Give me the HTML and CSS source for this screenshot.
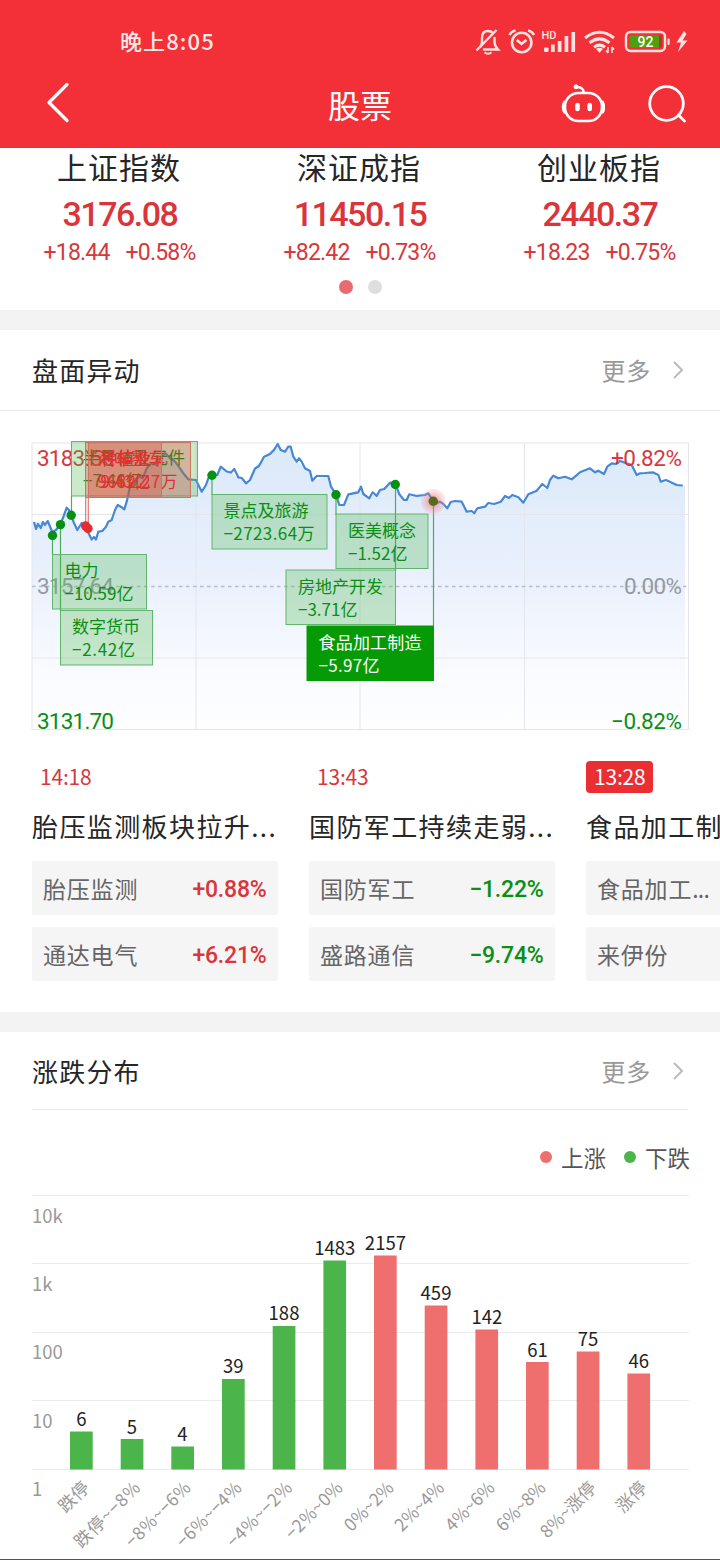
FILE: index.html
```
<!DOCTYPE html>
<html lang="zh-CN">
<head>
  <meta charset="UTF-8">
  <meta name="viewport" content="width=device-width, initial-scale=1.0">
  <title>股票</title>
  <link rel="stylesheet" href="styles.css">
</head>
<body>
  <header class="header">
    <div class="status-bar">
      <span class="status-time">晚上8:05</span>
      <svg class="status-icons" width="216" height="30" viewBox="474 27 216 30">
        <!-- Muted bell -->
        <g fill="none" stroke="#fde3e0" stroke-width="2.4">
          <path d="M480 47.500 Q482 45 482 41 V38 Q482 31 488 31 Q491 31 493 33"/>
          <path d="M494.500 37 V42 Q494.500 46 498 49.500 H483"/>
          <path d="M476.500 50.500 L496.500 30"/>
          <path d="M484.500 52.500 Q488 55 491.500 52.500" stroke-width="2"/>
        </g>
        <!-- Alarm clock -->
        <g fill="none" stroke="#fde3e0" stroke-width="2.6">
          <circle cx="521.700" cy="42.500" r="9.700"/>
          <path d="M516.800 40 L521.500 43.800 L526.500 40"/>
          <path d="M509.500 35 Q511 31.500 515.500 30.500 M528 30.500 Q532.500 31.500 534 35"/>
        </g>
        <!-- Signal -->
        <text class="hd-text" x="541.500" y="38.500">HD</text>
        <g fill="#fde3e0">
          <rect x="544" y="47.500" width="4.500" height="4.500" rx="1"/>
          <rect x="551" y="44.500" width="3.700" height="7.500"/>
          <rect x="557.800" y="41" width="3.700" height="11"/>
          <rect x="564.600" y="36" width="3.700" height="16"/>
          <rect x="571.400" y="32" width="3.700" height="20"/>
        </g>
        <!-- Wifi -->
        <g fill="none" stroke="#fde3e0" stroke-width="3">
          <path d="M585 38 Q599.500 26.500 614 38"/>
          <path d="M589.500 42.800 Q599.500 35 609.500 42.800"/>
          <path d="M594 47.200 Q599.500 43 605 47.200"/>
        </g>
        <path d="M596 49 Q599.500 46.500 603 49 L599.500 52.800 Z" fill="#fde3e0"/>
        <path d="M608 47 V53 M606 50.500 L608 53 M612 53 V47 M614 49.500 L612 47" fill="none" stroke="#fde3e0" stroke-width="1.500"/>
        <!-- Battery -->
        <rect x="626" y="32" width="39" height="19" rx="4.500" fill="none" stroke="#fde3e0" stroke-width="2.400"/>
        <rect x="629.500" y="35.500" width="29.500" height="12" fill="#4fa00c"/>
        <rect x="659" y="35.500" width="3" height="12" fill="#a8401c"/>
        <rect x="667.500" y="38.500" width="2.200" height="6.500" rx="1" fill="#fde3e0"/>
        <text class="battery-text" x="645.500" y="46.500" text-anchor="middle">92</text>
        <path d="M684 31 L676.500 42.500 H681 L678 52 L687.500 40.500 H682.500 L686.500 34 Z" fill="#fde3e0"/>
      </svg>
    </div>
    <div class="nav-bar">
      <svg class="back-icon" width="30" height="44" viewBox="0 0 30 44">
        <path d="M23 4.500 L5 22.500 L23 40.500" fill="none" stroke="#fff" stroke-width="3.200" stroke-linecap="round" stroke-linejoin="round"/>
      </svg>
      <h1 class="nav-title">股票</h1>
      <div class="nav-actions">
        <!-- Robot assistant -->
        <svg width="44" height="44" viewBox="561 82 44 44" fill="none" stroke="#fff" stroke-width="2.600">
          <rect x="565" y="93" width="37" height="28" rx="13.500"/>
          <path d="M565 101 Q563 104 563 107 Q563 111 565 113 M602 101 Q604 104 604 107 Q604 111 602 113"/>
          <path d="M583.500 92.500 Q584 87.500 577 87"/>
          <circle cx="576" cy="86.800" r="2" fill="#fff" stroke-width="1"/>
          <path d="M577.500 105 V109 M589.700 105 V109" stroke-width="4.600" stroke-linecap="round"/>
        </svg>
        <!-- Search -->
        <svg width="44" height="44" viewBox="645 82 44 44" fill="none" stroke="#fff" stroke-width="2.800" stroke-linecap="round">
          <circle cx="666.500" cy="103.500" r="16.800"/>
          <path d="M678.300 115 L684.500 121"/>
        </svg>
      </div>
    </div>
  </header>

  <!-- Indexes -->
  <section class="indexes">
    <div class="index-list">
      <div class="index">
        <div class="index-name">上证指数</div>
        <div class="index-value">3176.08</div>
        <div class="index-change"><span>+18.44</span><span>+0.58%</span></div>
      </div>
      <div class="index">
        <div class="index-name">深证成指</div>
        <div class="index-value">11450.15</div>
        <div class="index-change"><span>+82.42</span><span>+0.73%</span></div>
      </div>
      <div class="index">
        <div class="index-name">创业板指</div>
        <div class="index-value">2440.37</div>
        <div class="index-change"><span>+18.23</span><span>+0.75%</span></div>
      </div>
    </div>
    <div class="dots"><i class="dot active"></i><i class="dot"></i></div>
  </section>

  <!-- Market moves -->
  <section class="moves">
    <div class="section-head">
      <h2>盘面异动</h2>
      <a class="more">更多
        <svg width="14" height="22" viewBox="0 0 14 22"><path d="M3 3 L11 11 L3 19" fill="none" stroke="#bbb" stroke-width="2"/></svg>
      </a>
    </div>

    <svg class="line-chart" width="720" height="310" viewBox="0 430 720 310">
      <defs>
        <linearGradient id="area" x1="0" y1="443" x2="0" y2="729" gradientUnits="userSpaceOnUse">
          <stop offset="0" stop-color="#dbe9f9"/>
          <stop offset="0.500" stop-color="#ebf1fd"/>
          <stop offset="0.800" stop-color="#f9fbff"/>
          <stop offset="1" stop-color="#fefeff"/>
        </linearGradient>
        <radialGradient id="glow">
          <stop offset="0.300" stop-color="#ee4b50" stop-opacity="0.450"/>
          <stop offset="1" stop-color="#f7a0a0" stop-opacity="0.200"/>
        </radialGradient>
        <path id="price" d="M34 522 L36 529 L38 524 L40.700 528 L43 522 L45 525 L47.700 521 L52.300 532 L56 530 L60.300 524.600 L63.300 517 L66.700 507.700 L69 510 L71 515 L74 523 L77.300 530 L81.700 523 L84 525 L88 532 L91.700 539.500 L94 537 L96 539.500 L98.300 531.700 L102.300 531 L106 526.700 L108.300 521.700 L111.700 520 L115 510 L117.700 505 L121.700 507.300 L124.300 509.300 L126.700 501.700 L130 486.700 L135 485 L138.300 476.700 L142.700 478.300 L146.700 468.300 L151.700 463 L156.700 465 L161.700 456.700 L165 452.700 L170 458 L175 461.700 L180 468.300 L183.300 473.300 L188.300 479.300 L196 480 L201.700 491.700 L206 485 L208.300 478.300 L211.700 475.300 L217.300 475 L220.700 466.700 L226.700 471.500 L231 472.500 L234.300 469 L238.300 477.300 L241.700 478 L246 483.300 L250 480 L255 468.500 L259 466 L264 456.700 L270 454 L274 450 L277.700 444 L280.700 450 L285 451.700 L288.300 446.700 L290.700 446.700 L293.300 456.700 L296.700 461.700 L299 458.300 L301.700 461.700 L305 468.300 L310 471 L312.300 480.700 L316.700 476 L328.300 476 L331 486.700 L336 494.300 L339.300 505 L344 505 L348.300 494.300 L358.300 492.300 L361 486.700 L363.300 494 L369.300 498.300 L372.700 492.300 L376.700 496 L380 490 L384.300 489 L390 482.700 L395.300 483.300 L399.300 494.300 L404 500 L406.700 500 L409.300 494.300 L416.700 496 L425 495 L428.300 493.300 L433.300 501 L436.700 503.300 L440 501.700 L443.300 504 L447.300 508.300 L450.700 502 L455 501 L461.700 501.700 L466.700 511.700 L471.700 511 L474.300 513.300 L477.300 508.300 L485 506.700 L488.300 503 L494 504 L501 501.700 L505 496 L509 498 L512.300 495 L518.300 497.300 L523.300 502.700 L528.300 494.300 L536.700 490.700 L542.300 484 L547.300 488 L550 480 L553.300 475.700 L558.300 478.300 L565 476.700 L571.700 479.300 L580 472.300 L590 468.300 L595 472.300 L598.300 470.700 L604 474 L607.300 466.700 L611.700 463.300 L616 464 L620 461 L631.700 465 L636.700 475 L640 473.300 L645 473 L652.700 472.300 L658.300 475 L660.700 481.700 L666 480 L676.700 485 L682.700 485.500"/>
      </defs>

      <path fill="url(#area)" d="M32 729 V522 H34 L47.700 521 L52.300 532 L60.300 524.600 L66.700 507.700 L71 515 L77.300 530 L81.700 523 L91.700 539.500 L96 539.500 L98.300 531.700 L106 526.700 L111.700 520 L117.700 505 L124.300 509.300 L130 486.700 L135 485 L138.300 476.700 L151.700 463 L165 452.700 L180 468.300 L188.300 479.300 L196 480 L201.700 491.700 L208.300 478.300 L217.300 475 L220.700 466.700 L231 472.500 L246 483.300 L250 480 L255 468.500 L264 456.700 L277.700 444 L285 451.700 L290.700 446.700 L296.700 461.700 L310 471 L312.300 480.700 L328.300 476 L339.300 505 L344 505 L348.300 494.300 L361 489 L369.300 498.300 L390 482.700 L395.300 483.300 L404 500 L409.300 494.300 L428.300 493.300 L433.300 501 L447.300 508.300 L450.700 502 L461.700 501.700 L466.700 511.700 L474.300 513.300 L485 506.700 L501 501.700 L512.300 495 L523.300 502.700 L528.300 494.300 L547.300 488 L553.300 475.700 L571.700 479.300 L590 468.300 L604 474 L611.700 463.300 L620 461 L631.700 465 L636.700 475 L652.700 472.300 L660.700 481.700 L676.700 485 L685 485.500 V729 Z"/>
      <g class="grid">
        <rect x="32" y="443" width="656.500" height="286.500" fill="none"/>
        <path d="M196 443 V729 M360 443 V729 M524.500 443 V729 M32 514.500 H688 M32 658 H688"/>
      </g>
      <path d="M32 586.500 H688" stroke="#b9bec8" stroke-width="1.300" stroke-dasharray="3.500 3.500"/>
      <use href="#price" fill="none" stroke="#4788d6" stroke-width="2.200" stroke-linejoin="round"/>

      <g class="axis">
        <text class="up" x="37" y="465.500" textLength="77">3183.58</text>
        <text class="up" x="611" y="465.500" textLength="71">+0.82%</text>
        <text class="flat" x="37" y="594" textLength="77">3157.64</text>
        <text class="flat" x="624" y="594" textLength="58">0.00%</text>
        <text class="down" x="37" y="728.500" textLength="77">3131.70</text>
        <text class="down" x="611" y="728.500" textLength="71">−0.82%</text>
      </g>

      <!-- Sector tags -->
      <g class="tag">
        <path d="M52.500 535 V555 M60.500 524 V611 M71.500 515 V496 M212 475 V495 M336 494 V515 M395.500 484 V571 M433.500 501 V627"/>
        <rect x="71.500" y="441.500" width="126" height="54.500"/>
        <text x="83" y="464">半导体及元件</text><text x="83" y="487">−7.46亿</text>
        <rect x="52.500" y="554.500" width="94" height="54.500"/>
        <text x="64.500" y="577">电力</text><text x="64.500" y="600">−10.59亿</text>
        <rect x="60.500" y="610.500" width="92" height="54.500"/>
        <text x="72" y="633">数字货币</text><text x="72" y="656" textLength="63">−2.42亿</text>
        <rect x="212" y="494.500" width="115" height="54.500"/>
        <text x="223.500" y="517">景点及旅游</text><text x="223.500" y="540" textLength="91">−2723.64万</text>
        <rect x="336" y="514" width="92" height="54.500"/>
        <text x="348" y="536.500">医美概念</text><text x="348" y="559.500">−1.52亿</text>
        <rect x="286" y="570" width="109.500" height="54.500"/>
        <text x="298" y="592.500">房地产开发</text><text x="298" y="615.500">−3.71亿</text>
      </g>
      <g class="tag tag-up">
        <path d="M85.700 526 V498 M88.300 528 V498"/>
        <rect x="85.500" y="442.500" width="105" height="55"/>
        <text x="97.500" y="465">汽车整车</text><text x="97.500" y="488" textLength="80">9682.27万</text>
        <rect x="88.500" y="442.500" width="73" height="55"/>
        <text x="100.500" y="465">种植业</text><text x="100.500" y="488">9.43亿</text>
      </g>
      <g class="tag tag-active">
        <rect x="307" y="626" width="126.500" height="54.500"/>
        <text x="318.500" y="648.500" textLength="103">食品加工制造</text><text x="318.500" y="671.500" textLength="61">−5.97亿</text>
      </g>

      <circle cx="433.300" cy="501.300" r="12.500" fill="url(#glow)"/>
      <g fill="#079110">
        <circle cx="52.500" cy="535.500" r="4.700"/>
        <circle cx="60.500" cy="524.600" r="4.700"/>
        <circle cx="71.200" cy="515.300" r="4.700"/>
        <circle cx="212" cy="475.300" r="4.700"/>
        <circle cx="336" cy="494.700" r="4.700"/>
        <circle cx="395.300" cy="484.500" r="4.700"/>
        <circle cx="433.300" cy="501.300" r="4.700" fill="#566b1d"/>
      </g>
      <g fill="#e62b33">
        <circle cx="85.700" cy="526" r="4.700"/>
        <circle cx="88" cy="528.500" r="4.700"/>
      </g>
    </svg>

    <div class="news-list">
      <div class="news">
        <span class="news-time">14:18</span>
        <div class="news-title">胎压监测板块拉升...</div>
        <div class="stock"><span>胎压监测</span><b class="red">+0.88%</b></div>
        <div class="stock"><span>通达电气</span><b class="red">+6.21%</b></div>
      </div>
      <div class="news">
        <span class="news-time">13:43</span>
        <div class="news-title">国防军工持续走弱...</div>
        <div class="stock"><span>国防军工</span><b class="green">−1.22%</b></div>
        <div class="stock"><span>盛路通信</span><b class="green">−9.74%</b></div>
      </div>
      <div class="news">
        <span class="news-time current">13:28</span>
        <div class="news-title">食品加工制</div>
        <div class="stock"><span>食品加工<span class="ellipsis">...</span></span></div>
        <div class="stock"><span>来伊份</span></div>
      </div>
    </div>
  </section>

  <!-- Rise / fall distribution -->
  <section class="distribution">
    <div class="section-head inset">
      <h2>涨跌分布</h2>
      <a class="more">更多
        <svg width="14" height="22" viewBox="0 0 14 22"><path d="M3 3 L11 11 L3 19" fill="none" stroke="#bbb" stroke-width="2"/></svg>
      </a>
    </div>
    <div class="legend">
      <span class="legend-item"><i class="legend-dot rise"></i>上涨</span>
      <span class="legend-item"><i class="legend-dot fall"></i>下跌</span>
    </div>

    <svg class="bar-chart" width="720" height="370" viewBox="0 1190 720 370">
      <path class="bar-grid" d="M32 1195.500 H689 M32 1263.500 H689 M32 1332.500 H689 M32 1400.500 H689 M32 1469.500 H689"/>
      <g class="y-labels">
        <text x="32" y="1223">10k</text>
        <text x="32" y="1291">1k</text>
        <text x="32" y="1359">100</text>
        <text x="32" y="1428">10</text>
        <text x="32" y="1496">1</text>
      </g>
      <g fill="#4bb54c">
        <rect x="70" y="1431.500" width="22.700" height="38"/>
        <rect x="120.700" y="1439" width="22.700" height="30.500"/>
        <rect x="171.300" y="1446.500" width="22.700" height="23"/>
        <rect x="222" y="1379" width="22.700" height="90.500"/>
        <rect x="272.700" y="1326" width="22.700" height="143.500"/>
        <rect x="323.400" y="1260.500" width="22.700" height="209"/>
      </g>
      <g fill="#ef6f6f">
        <rect x="374" y="1255.500" width="22.700" height="214"/>
        <rect x="424.700" y="1305.500" width="22.700" height="164"/>
        <rect x="475.400" y="1329.500" width="22.700" height="140"/>
        <rect x="526" y="1362" width="22.700" height="107.500"/>
        <rect x="576.700" y="1351.500" width="22.700" height="118"/>
        <rect x="627.400" y="1373.500" width="22.700" height="96"/>
      </g>
      <g class="bar-values">
        <text x="81.500" y="1426">6</text>
        <text x="132" y="1433.500">5</text>
        <text x="182.500" y="1441">4</text>
        <text x="233.300" y="1373">39</text>
        <text x="284" y="1320">188</text>
        <text x="334.700" y="1254.500">1483</text>
        <text x="385.400" y="1250">2157</text>
        <text x="436" y="1299.500">459</text>
        <text x="486.800" y="1324">142</text>
        <text x="537.400" y="1356.500">61</text>
        <text x="588" y="1346">75</text>
        <text x="638.700" y="1368">46</text>
      </g>
      <g class="x-labels">
        <text transform="translate(90.500 1489) rotate(-45)">跌停</text>
        <text transform="translate(141.500 1489) rotate(-45)" textLength="85">跌停~−8%</text>
        <text transform="translate(192 1489) rotate(-45)" textLength="84">−8%~−6%</text>
        <text transform="translate(243 1489) rotate(-45)" textLength="84">−6%~−4%</text>
        <text transform="translate(293.500 1489) rotate(-45)" textLength="84">−4%~−2%</text>
        <text transform="translate(344 1489) rotate(-45)" textLength="73">−2%~0%</text>
        <text transform="translate(395 1489) rotate(-45)">0%~2%</text>
        <text transform="translate(445.500 1489) rotate(-45)">2%~4%</text>
        <text transform="translate(496 1489) rotate(-45)">4%~6%</text>
        <text transform="translate(547 1489) rotate(-45)">6%~8%</text>
        <text transform="translate(597.500 1489) rotate(-45)">8%~涨停</text>
        <text transform="translate(648 1489) rotate(-45)">涨停</text>
      </g>
    </svg>
  </section>
</body>
</html>
```
FILE: styles.css
```
* {
  box-sizing: border-box;
}

body {
  margin: 0;
  width: 720px;
  height: 1560px;
  overflow: hidden;
  background: #fff;
  color: #262626;
  font-family: "Noto Sans CJK SC", sans-serif;
  border-bottom: 1px solid #555;
}

h1, h2 {
  margin: 0;
  font-weight: 400;
}

svg {
  display: block;
  flex: none;
}

/* Header */
.header {
  height: 148px;
  background: #f32f38;
  color: #fff;
}

.status-bar {
  height: 60px;
  padding: 24px 30px 0 120px;
  display: flex;
  justify-content: space-between;
}

.status-time {
  font-size: 22px;
  line-height: 33px;
  font-weight: 500;
  letter-spacing: 1.1px;
  color: #fde9e6;
}

.status-icons {
  margin-top: 3px;
}

.hd-text {
  font: 500 11px Roboto, sans-serif;
  fill: #fde3e0;
}

.battery-text {
  font: 500 14px Roboto, sans-serif;
  fill: #fff;
}

.nav-bar {
  height: 88px;
  padding: 0 31px 0 44px;
  display: grid;
  grid-template-columns: 1fr auto 1fr;
  align-items: center;
}

.back-icon {
  margin-top: -5px;
}

.nav-title {
  font-size: 32px;
  line-height: 48px;
  padding-right: 13px;
}

.nav-actions {
  display: flex;
  justify-content: flex-end;
  gap: 40px;
}

/* Indexes */
.indexes {
  height: 182px;
  border-bottom: 20px solid #f3f3f3;
}

.index-list {
  display: grid;
  grid-template-columns: repeat(3, 1fr);
  text-align: center;
}

.index-name {
  padding-right: 2px;
  font-size: 30px;
  line-height: 36px;
  letter-spacing: 1px;
}

.index-value {
  margin-top: 8px;
  font: 500 34px/44px Roboto, sans-serif;
  letter-spacing: -1.5px;
  color: #d9353a;
}

.index-change {
  display: flex;
  justify-content: center;
  gap: 16px;
  padding-right: 1px;
  font: 400 23px/34px Roboto, sans-serif;
  letter-spacing: -0.8px;
  color: #d5383d;
}

.dots {
  display: flex;
  justify-content: center;
  gap: 15px;
  margin-top: 10px;
}

.dot {
  width: 14px;
  height: 14px;
  border-radius: 50%;
  background: #dedede;
}

.dot.active {
  background: #ea6b6f;
}

/* Sections */
.section-head {
  height: 81px;
  padding: 0 35px 0 32px;
  display: flex;
  justify-content: space-between;
  align-items: center;
  border-bottom: 1px solid #e9e9e9;
}

.section-head.inset {
  height: 78px;
  margin: 0 32px;
  padding: 0 3px 0 0;
}

.section-head h2 {
  font-size: 26px;
  line-height: 38px;
  letter-spacing: 1.2px;
}

.more {
  display: flex;
  align-items: center;
  gap: 20px;
  font-size: 24px;
  line-height: 34px;
  letter-spacing: 0.8px;
  color: #999;
}

.moves {
  height: 702px;
  border-bottom: 20px solid #f3f3f3;
}

/* Line chart */
.line-chart {
  margin-top: 19px;
}

.grid {
  stroke: #e3e6ec;
  stroke-width: 1;
}

.axis {
  font: 400 22.5px Roboto, sans-serif;
}

.up {
  fill: #d5383d;
}

.down {
  fill: #0a8f14;
}

.flat {
  fill: #959aa3;
}

.tag {
  font-family: "Noto Sans CJK SC", sans-serif;
  font-size: 17px;
  fill: #0a8f14;
}

.tag path {
  stroke: #4caf58;
  stroke-width: 1.2;
}

.tag rect {
  fill: rgba(78, 184, 78, 0.3);
  stroke: #62b56c;
}

.tag-up {
  fill: #e22f33;
}

.tag-up path {
  stroke: #e0787a;
}

.tag-up rect {
  fill: rgba(224, 60, 50, 0.3);
  stroke: #cc7364;
}

.tag-active {
  fill: #fff;
}

.tag-active rect {
  fill: #069a06;
  stroke: #069a06;
}

/* News */
.news-list {
  display: flex;
  gap: 31.5px;
  padding-left: 32px;
  margin-top: 21px;
  overflow: hidden;
}

.news {
  flex: none;
  width: 245.5px;
}

.news-time {
  display: inline-block;
  height: 32px;
  padding: 0 8px;
  font-size: 21px;
  line-height: 30px;
  letter-spacing: -0.2px;
  color: #d5383d;
  border-radius: 4px;
  vertical-align: top;
}

.news-time.current {
  background: #ea2e31;
  color: #fff;
}

.news-title {
  margin: 13px 0 15px;
  font-size: 26px;
  line-height: 40px;
  letter-spacing: 1.4px;
  white-space: nowrap;
}

.stock {
  height: 54px;
  margin-bottom: 12px;
  padding: 0 11px;
  display: flex;
  justify-content: space-between;
  align-items: center;
  background: #f5f5f5;
  border-radius: 2px;
  font-size: 23px;
  letter-spacing: 0.8px;
  color: #666;
}

.stock b {
  padding-top: 3px;
  font: 500 23px Roboto, sans-serif;
  letter-spacing: -0.2px;
}

.ellipsis {
  letter-spacing: -0.8px;
}

.red {
  color: #d9353a;
}

.green {
  color: #0a8f14;
}

/* Distribution */
.legend {
  display: flex;
  justify-content: flex-end;
  gap: 18px;
  height: 80px;
  padding: 14px 30px 0 0;
  align-items: center;
  font-size: 22.5px;
  color: #555;
}

.legend-item {
  display: flex;
  align-items: center;
  gap: 9px;
}

.legend-dot {
  width: 12px;
  height: 12px;
  border-radius: 50%;
}

.rise {
  background: #ef6f6f;
}

.fall {
  background: #4bb54c;
}

.bar-grid {
  stroke: #ebebeb;
}

.y-labels {
  font: 400 18.5px "Noto Sans CJK SC", sans-serif;
  fill: #999;
}

.bar-values {
  font: 400 18.5px "Noto Sans CJK SC", sans-serif;
  fill: #222;
  text-anchor: middle;
}

.x-labels {
  font: 400 17.5px "Noto Sans CJK SC", sans-serif;
  fill: #999;
  text-anchor: end;
}
```
